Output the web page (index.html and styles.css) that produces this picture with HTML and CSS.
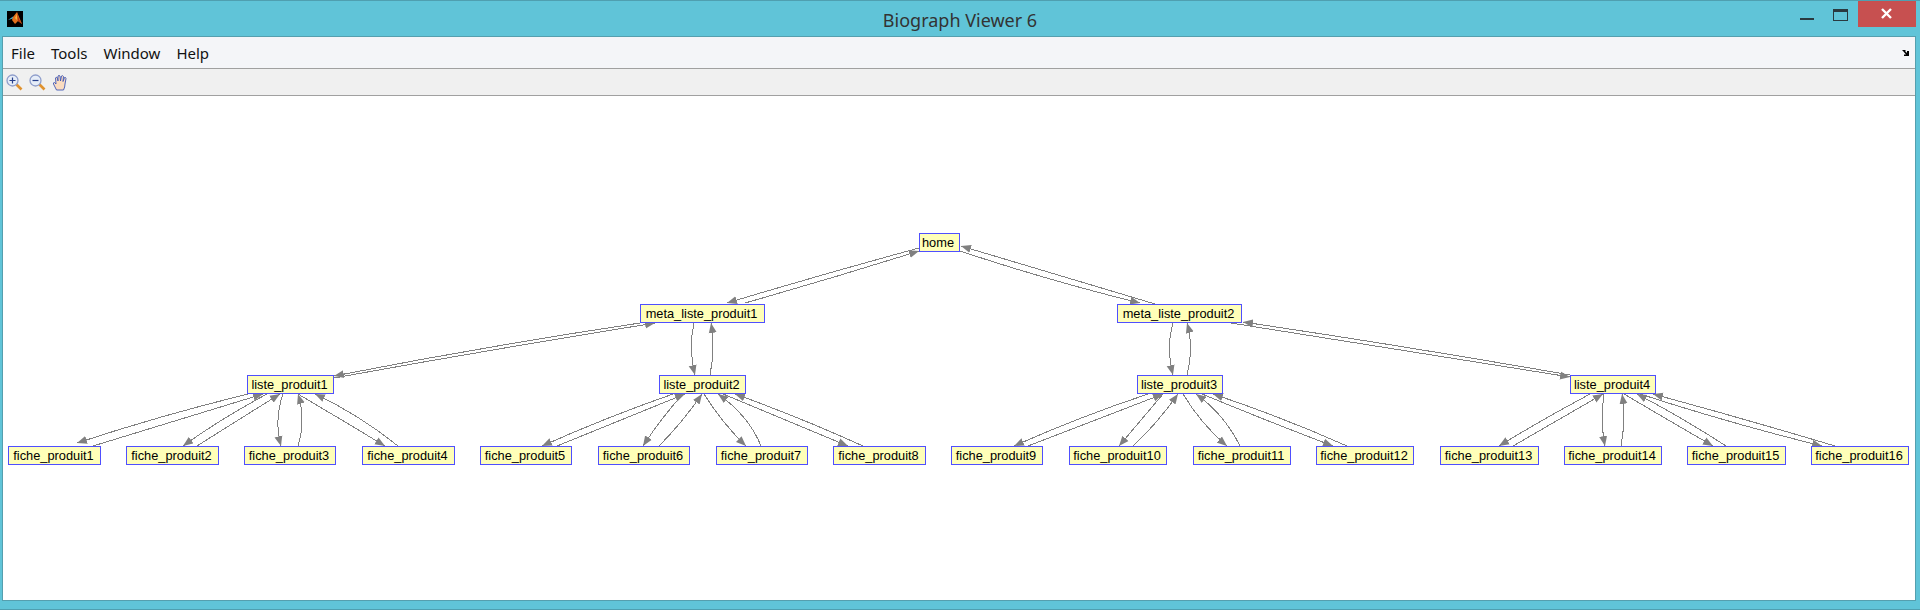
FILE: index.html
```html
<!DOCTYPE html>
<html lang="fr">
<head>
<meta charset="UTF-8">
<title>Biograph Viewer 6</title>
<link rel="stylesheet" href="styles.css">
</head>
<body>

<div class="window">
    <div class="titlebar">
        <div class="app-icon">
            <svg width="16" height="16" viewBox="0 0 16 16">
                <rect width="16" height="16" fill="#000"/>
                <path d="M1 9 L6 5.5 L8 7 Z" fill="#3fa7c9"/>
                <path d="M6 6 L10 1 L15 13 L11 10 L8 13 L5 9 Z" fill="#e2701c"/>
                <path d="M10 1 L12 8 L15 13 L11 10 Z" fill="#b8360f"/>
                <path d="M8 7 L10 3 L10 9 Z" fill="#f5b53c"/>
            </svg>
        </div>
        <div class="title">Biograph Viewer 6</div>
        <div class="win-buttons">
            <div class="win-btn">
                <svg width="34" height="26" viewBox="0 0 34 26"><rect x="10" y="17" width="14" height="2" fill="#2a3a40"/></svg>
            </div>
            <div class="win-btn">
                <svg width="34" height="26" viewBox="0 0 34 26"><rect x="9.5" y="8.5" width="14" height="11" fill="none" stroke="#2a3a40"/><rect x="9" y="8" width="15" height="3" fill="#2a3a40"/></svg>
            </div>
            <div class="win-btn close">
                <svg width="58" height="26" viewBox="0 0 58 26"><path d="M24 8 L33 17 M33 8 L24 17" stroke="#fff" stroke-width="2.4"/></svg>
            </div>
        </div>
    </div>

    <div class="client">
        <div class="menubar">
            <span class="menu-item">File</span>
            <span class="menu-item">Tools</span>
            <span class="menu-item">Window</span>
            <span class="menu-item">Help</span>
            <svg class="dock-arrow" width="8" height="6" viewBox="0 0 8 6"><path d="M0 0 H3 L4 1 H3 L5 3 V1 H7 V6 H2 V4.500 H4 L1 1 Z" fill="#000"/></svg>
        </div>

        <div class="toolbar">
            <svg width="17" height="17" viewBox="0 0 17 17">
                <path d="M10 10 L15.500 15.500" stroke="#e0922e" stroke-width="2.600"/>
                <circle cx="6.500" cy="6.500" r="5.500" fill="#e6edf8" stroke="#8f9ecb" stroke-width="1.300"/>
                <path d="M3.500 6.500 H9.500 M6.500 3.500 V9.500" stroke="#27408b" stroke-width="1.200"/>
            </svg>
            <svg width="17" height="17" viewBox="0 0 17 17">
                <path d="M10 10 L15.500 15.500" stroke="#e0922e" stroke-width="2.600"/>
                <circle cx="6.500" cy="6.500" r="5.500" fill="#e6edf8" stroke="#8f9ecb" stroke-width="1.300"/>
                <path d="M3.500 6.500 H9.500" stroke="#27408b" stroke-width="1.200"/>
            </svg>
            <svg width="17" height="17" viewBox="0 0 17 17">
                <path d="M4.500 16 L1.500 10 Q1 8.500 2.500 8.500 L4 10 L3.500 4 Q4 2.800 5.200 3.500 L6 7 L6 2 Q7 .800 8 2 L8.500 7 L9.500 2 Q10.500 1 11.500 2.500 L11 7.500 L12.500 3.500 Q13.800 3 14 4.500 L13 10 Q13 13 11.500 16 Z" fill="#fbdcc0" stroke="#3f57b5" stroke-width=".9"/>
            </svg>
        </div>

        <div class="canvas">
            <svg class="graph" width="1912" height="504" viewBox="3 96 1912 504">
                <defs>
                    <marker id="head" markerUnits="userSpaceOnUse" markerWidth="11" markerHeight="9" refX="10" refY="4.500" orient="auto">
                        <path d="M0 .5 L10 4.500 L0 8.500 Z" fill="#808080"/>
                    </marker>
                </defs>

                <g class="edges">
                    <path d="M919 248 Q823 274 727 303"/>
                    <path d="M745 303 Q833 278 919 251"/>
                    <path d="M960 251 Q1050 281 1140 303"/>
                    <path d="M1155 304 Q1058 275 961 246"/>

                    <path d="M640 323 Q487 346 334 376"/>
                    <path d="M334 378 Q494 349 655 323"/>
                    <path d="M694 323 C690 340 690 355 695 375"/>
                    <path d="M710 375 C714 355 714 340 711 323"/>
                    <path d="M1173 323 C1168 340 1168 355 1173 375"/>
                    <path d="M1187 375 C1192 355 1192 340 1187 323"/>
                    <path d="M1231 323 Q1400 350 1570 377"/>
                    <path d="M1570 375 Q1405 346 1243 322"/>

                    <path d="M248 394 Q162 415 77 443"/>
                    <path d="M93 446 Q178 420 263 394"/>
                    <path d="M267 394 Q222 418 183 446"/>
                    <path d="M197 446 Q238 420 280 394"/>
                    <path d="M283 394 Q274 420 281 446"/>
                    <path d="M298 446 Q306 420 298 394"/>
                    <path d="M298 394 Q342 420 385 446"/>
                    <path d="M398 446 Q358 414 315 394"/>

                    <path d="M673 394 Q607 417 542 446"/>
                    <path d="M557 446 Q621 420 685 394"/>
                    <path d="M683 394 Q662 417 643 446"/>
                    <path d="M659 446 Q682 423 702 394"/>
                    <path d="M704 394 Q723 424 746 446"/>
                    <path d="M761 446 Q749 416 718 394"/>
                    <path d="M723 394 Q785 420 848 446"/>
                    <path d="M863 446 Q799 417 735 394"/>

                    <path d="M1148 394 Q1079 417 1014 446"/>
                    <path d="M1028 446 Q1096 420 1163 394"/>
                    <path d="M1163 394 Q1141 420 1119 446"/>
                    <path d="M1133 446 Q1156 425 1178 394"/>
                    <path d="M1183 394 Q1201 424 1227 446"/>
                    <path d="M1240 446 Q1224 414 1196 394"/>
                    <path d="M1202 394 Q1267 421 1333 446"/>
                    <path d="M1347 446 Q1282 417 1213 394"/>

                    <path d="M1590 394 Q1543 419 1499 446"/>
                    <path d="M1513 446 Q1558 420 1603 394"/>
                    <path d="M1604 394 Q1600 420 1605 446"/>
                    <path d="M1621 446 Q1626 420 1622 394"/>
                    <path d="M1624 394 Q1668 420 1713 446"/>
                    <path d="M1726 446 Q1683 418 1637 394"/>
                    <path d="M1640 394 Q1729 423 1822 446"/>
                    <path d="M1835 446 Q1745 419 1653 394"/>
                </g>

                <g class="nodes">
                    <rect x="919.5" y="233.500" width="40" height="18"/><text x="939" y="247">home</text>
                    <rect x="640.5" y="304.500" width="124" height="18"/><text x="702.500" y="318">meta_liste_produit1</text>
                    <rect x="1117.5" y="304.500" width="124" height="18"/><text x="1179.500" y="318">meta_liste_produit2</text>

                    <rect x="247.5" y="375.500" width="86" height="18"/><text x="290.500" y="389">liste_produit1</text>
                    <rect x="659.5" y="375.500" width="86" height="18"/><text x="702.500" y="389">liste_produit2</text>
                    <rect x="1137.5" y="375.500" width="85" height="18"/><text x="1180" y="389">liste_produit3</text>
                    <rect x="1570.5" y="375.500" width="85" height="18"/><text x="1613" y="389">liste_produit4</text>

                    <rect x="8.5" y="446.500" width="92" height="18"/><text x="54.500" y="460">fiche_produit1</text>
                    <rect x="126.5" y="446.500" width="92" height="18"/><text x="172.500" y="460">fiche_produit2</text>
                    <rect x="244.5" y="446.500" width="91" height="18"/><text x="290" y="460">fiche_produit3</text>
                    <rect x="362.5" y="446.500" width="92" height="18"/><text x="408.500" y="460">fiche_produit4</text>
                    <rect x="480.5" y="446.500" width="91" height="18"/><text x="526" y="460">fiche_produit5</text>
                    <rect x="598.5" y="446.500" width="91" height="18"/><text x="644" y="460">fiche_produit6</text>
                    <rect x="716.5" y="446.500" width="91" height="18"/><text x="762" y="460">fiche_produit7</text>
                    <rect x="833.5" y="446.500" width="92" height="18"/><text x="879.500" y="460">fiche_produit8</text>
                    <rect x="951.5" y="446.500" width="91" height="18"/><text x="997" y="460">fiche_produit9</text>
                    <rect x="1069.5" y="446.500" width="97" height="18"/><text x="1118" y="460">fiche_produit10</text>
                    <rect x="1193.5" y="446.500" width="97" height="18"/><text x="1242" y="460">fiche_produit11</text>
                    <rect x="1316.5" y="446.500" width="97" height="18"/><text x="1365" y="460">fiche_produit12</text>
                    <rect x="1440.5" y="446.500" width="98" height="18"/><text x="1489.500" y="460">fiche_produit13</text>
                    <rect x="1564.5" y="446.500" width="97" height="18"/><text x="1613" y="460">fiche_produit14</text>
                    <rect x="1687.5" y="446.500" width="98" height="18"/><text x="1736.500" y="460">fiche_produit15</text>
                    <rect x="1811.5" y="446.500" width="97" height="18"/><text x="1860" y="460">fiche_produit16</text>
                </g>
            </svg>
        </div>
    </div>
</div>

</body>
</html>
```

FILE: styles.css
```css
html, body { margin: 0; padding: 0; }
body { background: #60c4d8; overflow: hidden; }

.window { box-sizing: border-box; height: 610px; display: flex; flex-direction: column; background: #60c4d8; border-top: 1px solid #4f9fb0; border-bottom: 1px solid #4f9fb0; }

.titlebar { height: 35px; flex: none; display: grid; grid-template-columns: 1fr auto 1fr; }
.app-icon { padding: 10px 0 0 7px; }
.app-icon svg { display: block; }
.title { font-family: "Noto Sans", sans-serif; font-size: 18px; color: #333; line-height: 38px; }
.win-buttons { display: flex; justify-content: flex-end; align-items: flex-start; padding-right: 4px; }
.win-btn { height: 26px; }
.win-btn svg { display: block; }
.close { background: #c75050; }

.client { flex: 1; min-height: 0; margin: 0 4px 8px 2px; border: 1px solid #559fae; display: flex; flex-direction: column; background: #fff; }

.menubar { height: 31px; flex: none; display: flex; align-items: center; background: #f4f5f8; border-bottom: 1px solid #a0a0a0; padding-left: 8px; font-family: "Noto Sans", sans-serif; font-size: 15px; color: #111; }
.menu-item { margin-right: 16px; }
.dock-arrow { margin-left: auto; margin-right: 5px; }

.toolbar { height: 26px; flex: none; display: flex; align-items: center; gap: 6px; background: #f0f0f0; border-bottom: 1px solid #a0a0a0; padding-left: 3px; }

.canvas { flex: 1; min-height: 0; background: #fff; }
.graph { display: block; }

.edges path { fill: none; stroke: #808080; stroke-width: 1; shape-rendering: crispEdges; marker-end: url(#head); }
.nodes rect { fill: #ffffb8; stroke: #4f4fff; stroke-width: 1; shape-rendering: crispEdges; }
.nodes text { font-family: "Liberation Sans", Arial, sans-serif; font-size: 12.8px; text-anchor: middle; fill: #000; transform: translateX(-1px); }
```
